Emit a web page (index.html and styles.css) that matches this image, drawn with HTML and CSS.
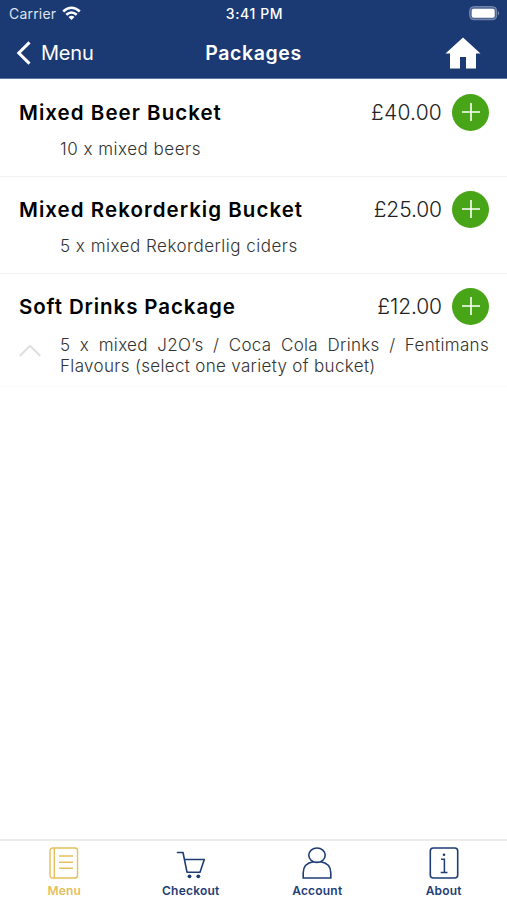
FILE: index.html
```html
<!DOCTYPE html>
<html lang="en">
<head>
<meta charset="utf-8">
<title>Packages</title>
<link rel="stylesheet" href="styles.css">
</head>
<body>
<header class="header">
  <div class="status">
    <div class="carrier"><span>Carrier</span>
      <svg width="19" height="15" viewBox="0 0 19 15" fill="none" stroke="#fff" stroke-width="2.6"><path d="M1.2 5.5Q9.5-2 17.8 5.5M4.3 8.8Q9.5 4.2 14.7 8.8"/><path d="M6.5 10.9Q9.5 8.4 12.5 10.9L9.5 14Z" fill="#fff" stroke="none"/></svg>
    </div>
    <span class="time">3:41 PM</span>
    <svg class="battery" width="31" height="15" viewBox="0 0 31 15"><rect x=".7" y=".7" width="27" height="13" rx="4" fill="#4c6696" stroke="#8192b4"/><rect x="2.7" y="2.7" width="23" height="9" rx="2" fill="#fff"/><path d="M29 5q2 2.2 0 4.5z" fill="#8c9cbd"/></svg>
  </div>
  <nav class="nav">
    <a class="back"><svg width="16" height="24" viewBox="0 0 16 24" fill="none" stroke="#fff" stroke-width="3"><path d="M13.5 1.4 2.8 12l10.7 10.6"/></svg><span>Menu</span></a>
    <h1>Packages</h1>
    <a class="home"><svg width="36" height="32" viewBox="0 0 36 32"><path d="M18 .5 35.5 16.5H31V31.5H21V20H15V31.5H5V16.5H.5Z" fill="#fff"/></svg></a>
  </nav>
</header>
<main>
  <article class="item">
    <div class="row"><h2 class="t1">Mixed Beer Bucket</h2><span class="price">£40.00</span><button class="add"><svg width="18" height="18" viewBox="0 0 18 18"><path d="M9 0v18M0 9h18" stroke="#fff" stroke-width="1.6"/></svg></button></div>
    <p class="desc">10 x mixed beers</p>
  </article>
  <article class="item">
    <div class="row"><h2 class="t2">Mixed Rekorderkig Bucket</h2><span class="price p2">£25.00</span><button class="add"><svg width="18" height="18" viewBox="0 0 18 18"><path d="M9 0v18M0 9h18" stroke="#fff" stroke-width="1.6"/></svg></button></div>
    <p class="desc">5 x mixed Rekorderlig ciders</p>
  </article>
  <article class="item last">
    <div class="row"><h2 class="t3">Soft Drinks Package</h2><span class="price p3">£12.00</span><button class="add"><svg width="18" height="18" viewBox="0 0 18 18"><path d="M9 0v18M0 9h18" stroke="#fff" stroke-width="1.6"/></svg></button></div>
    <div class="details"><svg width="22" height="13" viewBox="0 0 22 13" fill="none" stroke="#dedede" stroke-width="2"><path d="M.7 12 11 1.8 21.3 12"/></svg>
    <p class="desc">5 x mixed J2O’s / Coca Cola Drinks / Fentimans Flavours (select one variety of bucket)</p></div>
  </article>
</main>
<footer class="tabs">
  <a class="tab active"><svg width="30" height="32" viewBox="0 0 30 32" fill="none" stroke="currentColor" stroke-width="1.4"><rect x="1" y="1" width="27.5" height="30" rx="2.5"/><path d="M5.3 1v30M10 9h14M10 15.2h14M10 21.3h14"/></svg><span>Menu</span></a>
  <a class="tab"><svg width="30" height="32" viewBox="0 0 30 32" fill="none" stroke="currentColor" stroke-width="1.6" stroke-linecap="round" stroke-linejoin="round"><path d="M1.5 5.5H7L11 25.2H24L28.3 12.5H8.5"/><circle cx="13.5" cy="29.3" r="1.9" fill="currentColor" stroke="none"/><circle cx="22.3" cy="29.3" r="1.9" fill="currentColor" stroke="none"/></svg><span>Checkout</span></a>
  <a class="tab"><svg width="30" height="32" viewBox="0 0 30 32" fill="none" stroke="currentColor" stroke-width="1.6"><ellipse cx="15" cy="8.2" rx="8.2" ry="7.2"/><path d="M11.5 14.8C4.5 15.8 1.2 20.2 1.2 26V31H28.8V26C28.8 20.2 25.5 15.8 18.5 14.8"/></svg><span>Account</span></a>
  <a class="tab"><svg width="30" height="32" viewBox="0 0 30 32" fill="none" stroke="currentColor" stroke-width="1.6"><rect x="1.3" y="1" width="27.4" height="30" rx="3"/><path d="M12 12.3h3.4V25.2M11.7 25.5h6.8" stroke-width="1.5"/><circle cx="15" cy="7.8" r="1.3" fill="currentColor" stroke="none"/></svg><span>About</span></a>
</footer>
</body>
</html>
```
FILE: styles.css
```css
* { box-sizing: border-box; }
body { margin: 0; height: 900px; display: flex; flex-direction: column; background: #fff; color: #000; font-family: Inter, "Liberation Sans", sans-serif; overflow: hidden; }
h1, h2, p { margin: 0; }
svg { display: block; flex: none; }
.header { height: 79px; flex: none; background: #1b3a73; color: #fff; border-bottom: 1px solid #5f78a6; }
.status { height: 27px; display: grid; grid-template-columns: 1fr auto 1fr; align-items: center; padding: 0 7px 0 9px; }
.carrier { display: flex; align-items: center; gap: 6px; font-size: 14px; letter-spacing: .2px; color: #dce3ef; }
.time { font-size: 14px; font-weight: 500; letter-spacing: .6px; }
.battery { justify-self: end; }
.nav { height: 51px; display: grid; grid-template-columns: 1fr auto 1fr; align-items: center; padding: 0 26px 0 16px; }
.back { display: flex; align-items: center; gap: 9px; font-size: 20px; letter-spacing: -.2px; }
h1 { font-size: 19.5px; font-weight: 600; line-height: 26px; letter-spacing: .6px; margin: 0 -5px 0 5px; }
.home { justify-self: end; }
.item { height: 97px; border-bottom: 1px solid #f2f2f2; padding: 13px 18px 0 19px; }
.item:first-child { height: 98px; padding-top: 14px; }
.item.last { height: 113px; border-color: #fafafa; }
.row { display: flex; align-items: center; height: 38px; }
h2 { flex: 1; font-size: 20.5px; font-weight: 600; white-space: nowrap; }
.t1, .t2 { letter-spacing: 1.04px; }
.t3 { letter-spacing: .9px; }
.price { font-size: 21px; font-weight: 300; color: #222; letter-spacing: .2px; margin-right: 10px; }
.p2, .p3 { letter-spacing: -.1px; }
.add { width: 37px; height: 37px; padding: 0; border: 0; border-radius: 50%; background: #48a518; display: grid; place-items: center; }
.desc { font-size: 17px; font-weight: 300; line-height: 21px; color: #333; letter-spacing: .5px; margin: 8px 0 0 41px; white-space: nowrap; }
.details { display: flex; align-items: flex-start; gap: 19px; margin-top: 10px; }
.details svg { margin-top: 9px; }
.details .desc { flex: 1; margin: 0; letter-spacing: .33px; white-space: normal; text-align: justify; }
.tabs { height: 61px; margin-top: auto; border-top: 2px solid #ececec; display: grid; grid-template-columns: repeat(4, 1fr); padding-left: 1px; }
.tab { display: flex; flex-direction: column; align-items: center; padding-top: 6px; color: #1e3d75; }
.tab span { font-size: 12px; font-weight: 600; letter-spacing: .2px; line-height: 16px; margin-top: 4px; }
.active { color: #e5c05c; }
```
